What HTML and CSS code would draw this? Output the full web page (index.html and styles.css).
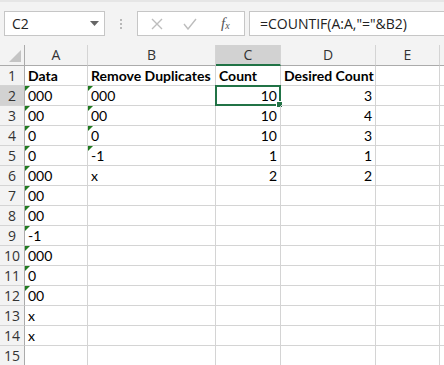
FILE: index.html
```html
<!DOCTYPE html>
<html lang="en">
<head>
    <meta charset="UTF-8">
    <title>COUNTIF</title>
    <link rel="stylesheet" href="styles.css">
</head>
<body>
    <div class="toolbar">
        <div class="namebox">
            <span>C2</span>
            <svg class="caret" width="9" height="5" viewBox="0 0 9 5"><path d="M0 0h9L4.5 5z" fill="#666"/></svg>
        </div>
        <div class="grip">
            <i></i><i></i><i></i>
        </div>
        <div class="fxbtns">
            <svg width="12" height="12" viewBox="0 0 12 12"><path d="M1 1l10 10M11 1L1 11" stroke="#bdbdbd" stroke-width="1.4" fill="none"/></svg>
            <svg width="14" height="12" viewBox="0 0 14 12"><path d="M1 6l4 5 8-10" stroke="#bdbdbd" stroke-width="1.4" fill="none"/></svg>
            <span class="fx">f<sub>x</sub></span>
        </div>
        <div class="formula">=COUNTIF(A:A,"="&amp;B2)</div>
    </div>

    <div class="sheet">
        <div class="corner"><svg width="12" height="12" viewBox="0 0 12 12"><path d="M12 0v12H0z" fill="#c4c4c4"/></svg></div>
        <div class="colhead">A</div>
        <div class="colhead">B</div>
        <div class="colhead sel">C</div>
        <div class="colhead">D</div>
        <div class="colhead">E</div>
        <div class="colhead edge"></div>

        <div class="rowhead">1</div>
        <div class="cell b">Data</div>
        <div class="cell b">Remove Duplicates</div>
        <div class="cell b">Count</div>
        <div class="cell b">Desired Count</div>
        <div class="cell"></div>
        <div class="cell edge"></div>

        <div class="rowhead sel">2</div>
        <div class="cell tri">000</div>
        <div class="cell tri">000</div>
        <div class="cell num active">10<span class="handle"></span></div>
        <div class="cell num">3</div>
        <div class="cell"></div>
        <div class="cell edge"></div>

        <div class="rowhead">3</div>
        <div class="cell tri">00</div>
        <div class="cell tri">00</div>
        <div class="cell num">10</div>
        <div class="cell num">4</div>
        <div class="cell"></div>
        <div class="cell edge"></div>

        <div class="rowhead">4</div>
        <div class="cell tri">0</div>
        <div class="cell tri">0</div>
        <div class="cell num">10</div>
        <div class="cell num">3</div>
        <div class="cell"></div>
        <div class="cell edge"></div>

        <div class="rowhead">5</div>
        <div class="cell tri">0</div>
        <div class="cell tri">-1</div>
        <div class="cell num">1</div>
        <div class="cell num">1</div>
        <div class="cell"></div>
        <div class="cell edge"></div>

        <div class="rowhead">6</div>
        <div class="cell tri">000</div>
        <div class="cell">x</div>
        <div class="cell num">2</div>
        <div class="cell num">2</div>
        <div class="cell"></div>
        <div class="cell edge"></div>

        <div class="rowhead">7</div>
        <div class="cell tri">00</div>
        <div class="cell"></div><div class="cell"></div><div class="cell"></div><div class="cell"></div><div class="cell edge"></div>

        <div class="rowhead">8</div>
        <div class="cell tri">00</div>
        <div class="cell"></div><div class="cell"></div><div class="cell"></div><div class="cell"></div><div class="cell edge"></div>

        <div class="rowhead">9</div>
        <div class="cell tri">-1</div>
        <div class="cell"></div><div class="cell"></div><div class="cell"></div><div class="cell"></div><div class="cell edge"></div>

        <div class="rowhead">10</div>
        <div class="cell tri">000</div>
        <div class="cell"></div><div class="cell"></div><div class="cell"></div><div class="cell"></div><div class="cell edge"></div>

        <div class="rowhead">11</div>
        <div class="cell tri">0</div>
        <div class="cell"></div><div class="cell"></div><div class="cell"></div><div class="cell"></div><div class="cell edge"></div>

        <div class="rowhead">12</div>
        <div class="cell tri">00</div>
        <div class="cell"></div><div class="cell"></div><div class="cell"></div><div class="cell"></div><div class="cell edge"></div>

        <div class="rowhead">13</div>
        <div class="cell">x</div>
        <div class="cell"></div><div class="cell"></div><div class="cell"></div><div class="cell"></div><div class="cell edge"></div>

        <div class="rowhead">14</div>
        <div class="cell">x</div>
        <div class="cell"></div><div class="cell"></div><div class="cell"></div><div class="cell"></div><div class="cell edge"></div>

        <div class="rowhead">15</div>
        <div class="cell"></div><div class="cell"></div><div class="cell"></div><div class="cell"></div><div class="cell"></div><div class="cell edge"></div>
    </div>
</body>
</html>
```

FILE: styles.css
```css
body {
    margin: 0;
    width: 444px;
    height: 365px;
    overflow: hidden;
    background: #fff;
    font-family: Lato, "Liberation Sans", sans-serif;
}

.toolbar {
    display: flex;
    align-items: center;
    height: 45px;
    padding: 0 0 0 4px;
    background: #f3f3f3;
    border-top: 2px solid #e6e6e6;
    box-sizing: border-box;
}

.namebox {
    display: flex;
    align-items: center;
    justify-content: space-between;
    width: 101px;
    height: 25px;
    padding: 0 5px 0 7px;
    box-sizing: border-box;
    background: #fff;
    border: 1px solid #c6c6c6;
    font-family: "Open Sans", sans-serif;
    font-size: 14px;
    color: #222;
}

.grip {
    display: flex;
    flex-direction: column;
    gap: 2px;
    margin: 0 15px 0 15px;
}

.grip i {
    display: block;
    width: 2px;
    height: 2px;
    background: #b8b8b8;
}

.fxbtns {
    display: flex;
    align-items: center;
    width: 108px;
    height: 25px;
    padding: 0 0 0 13px;
    gap: 20px;
    box-sizing: border-box;
    background: #fff;
    border: 1px solid #c6c6c6;
}

.fx {
    font-family: "Liberation Serif", serif;
    font-style: italic;
    font-size: 15px;
    color: #555;
    margin-left: 4px;
}

.fx sub {
    font-size: 10px;
    vertical-align: -1px;
}

.formula {
    flex: 1;
    height: 25px;
    margin-left: 4px;
    padding: 0 0 0 10px;
    box-sizing: border-box;
    background: #fff;
    border: 1px solid #c6c6c6;
    border-right: none;
    font-family: "Open Sans", sans-serif;
    font-size: 14px;
    line-height: 23px;
    color: #222;
}

.sheet {
    display: grid;
    grid-template-columns: 25px 63px 128px 65px 95px 64px 4px;
    grid-template-rows: 21px repeat(15, 20px);
}

.corner,
.colhead {
    background: #f3f3f3;
    border-right: 1px solid #d4d4d4;
    border-bottom: 1px solid #ababab;
    box-sizing: border-box;
}

.corner {
    display: flex;
    align-items: flex-end;
    justify-content: flex-end;
    padding: 0 3px 3px 0;
    border-right-color: #ababab;
}

.colhead {
    font-family: "Open Sans", sans-serif;
    font-size: 14px;
    line-height: 20px;
    text-align: center;
    color: #333;
}

.colhead.sel {
    background: #d2d2d2;
    border-bottom: 2px solid #217346;
}

.colhead.edge {
    border-right: none;
}

.rowhead {
    background: #f3f3f3;
    border-right: 1px solid #ababab;
    border-bottom: 1px solid #d4d4d4;
    box-sizing: border-box;
    font-family: "Open Sans", sans-serif;
    font-size: 14px;
    line-height: 19px;
    text-align: center;
    color: #333;
}

.rowhead.sel {
    background: #d2d2d2;
}

.cell {
    position: relative;
    border-right: 1px solid #d4d4d4;
    border-bottom: 1px solid #d4d4d4;
    box-sizing: border-box;
    padding: 0 3px;
    font-size: 14px;
    line-height: 20px;
    color: #000;
    white-space: nowrap;
}

.cell.edge {
    border-right: none;
}

.b {
    font-weight: bold;
}

.num {
    text-align: right;
}

.tri::before {
    content: "";
    position: absolute;
    left: 0;
    top: 0;
    border-top: 5px solid #1f7a1f;
    border-right: 5px solid transparent;
}

.active {
    border: 2px solid #217346;
    margin: -1px 0 0 -1px;
    line-height: 18px;
    padding-right: 2px;
}

.handle {
    position: absolute;
    right: -4px;
    bottom: -4px;
    width: 5px;
    height: 5px;
    background: #217346;
    border: 1px solid #fff;
}
```
